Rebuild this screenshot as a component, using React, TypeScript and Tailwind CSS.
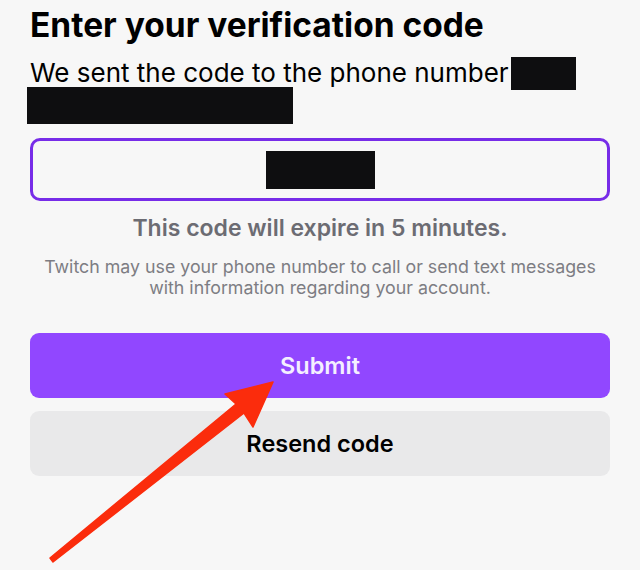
import React from "react";

export default function App() {
  return (
    <div
      className="relative w-[640px] h-[570px] overflow-hidden bg-[#f7f7f7] text-black"
      style={{ fontFamily: "Inter, 'Liberation Sans', sans-serif" }}
    >
      <div className="flex flex-col px-[30px] pt-[2px]">
        <h1 className="text-[33.5px] font-bold leading-[46px] whitespace-nowrap">
          Enter your verification code
        </h1>
        <div className="mt-[8px] text-[26px] leading-[34px]">
          <div className="flex items-center">
            <span className="whitespace-nowrap">We sent the code to the phone number</span>
            <span className="ml-[2px] inline-block w-[65px] h-[33px] bg-[#0e0e10]" />
          </div>
          <div className="-ml-[3px] -mt-[3px] w-[266px] h-[37px] bg-[#0e0e10]" />
        </div>
        <div className="mt-[14px] h-[63px] rounded-[10px] border-[3px] border-[#772ce8] flex items-center justify-center">
          <div className="w-[109px] h-[38px] bg-[#0e0e10]" />
        </div>
        <p className="mt-[13px] text-center text-[23px] leading-[28px] font-semibold text-[#6c6c73]">
          This code will expire in 5 minutes.
        </p>
        <p className="mt-[14px] text-center text-[17.8px] leading-[21px] text-[#7d7d83]">
          Twitch may use your phone number to call or send text messages
          <br />
          with information regarding your account.
        </p>
        <button className="mt-[35px] h-[65px] rounded-[9px] bg-[#9147ff] text-[#f4efff] text-[23.5px] font-semibold">
          Submit
        </button>
        <button className="mt-[13px] h-[65px] rounded-[9px] bg-[#e9e9ea] text-black text-[23.5px] font-semibold">
          Resend code
        </button>
      </div>
      <svg
        className="absolute left-0 top-0"
        width="640"
        height="570"
        viewBox="0 0 640 570"
      >
        <path
          d="M273 382 L225 394 L236 404 L50 558 L53 562 L244 413 L253 427 Z"
          fill="#fb2c0c"
          stroke="#fb2c0c"
          strokeWidth="1.5"
          strokeLinejoin="round"
        />
      </svg>
    </div>
  );
}
